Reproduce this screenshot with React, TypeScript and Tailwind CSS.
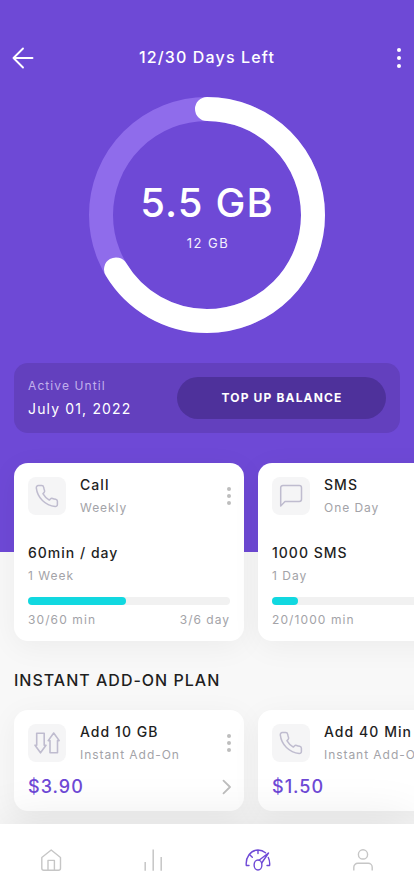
import React from 'react';

interface Usage {
  title: string;
  period: string;
  amount: string;
  duration: string;
  used: string;
  daysUsed?: string;
  percent: number;
  icon: React.ReactNode;
}

interface AddOn {
  title: string;
  price: string;
  icon: React.ReactNode;
}

const PhoneIcon = () => (
  <svg width="38" height="38" viewBox="0 0 38 38" fill="none" stroke="#bfbccf" strokeWidth="1.5" strokeLinejoin="round">
    <path d="M10.3 8.6h3.4c1 0 1.8.7 2 1.7.2 1.2.4 2.1.8 3.1.3.8.1 1.6-.5 2.2l-1.1 1.1c1.6 2.9 3.5 4.8 6.4 6.4l1.1-1.1c.6-.6 1.4-.8 2.2-.5 1 .4 1.9.6 3.1.8 1 .2 1.7 1 1.7 2v3.2c0 1.2-1 2.1-2.2 2C17.3 28.4 9.4 20.7 8.3 10.8 8.2 9.6 9.1 8.6 10.3 8.6z" />
  </svg>
);

const MessageIcon = () => (
  <svg width="38" height="38" viewBox="0 0 38 38" fill="none" stroke="#bfbccf" strokeWidth="1.5" strokeLinejoin="round">
    <path d="M8.7 29V10.7a2.2 2.2 0 0 1 2.2-2.2h16.4a2.2 2.2 0 0 1 2.2 2.2v11.6a2.2 2.2 0 0 1-2.2 2.2H13z" />
  </svg>
);

const TransferIcon = () => (
  <svg width="38" height="38" viewBox="0 0 38 38" fill="none" stroke="#bfbccf" strokeWidth="1.6" strokeLinejoin="round">
    <path d="M8.7 9.2h7.5v12H18l-5.5 7.6L7 21.2h1.7z" />
    <path d="M22 28.7h7.5V16.6h1.7L25.7 9l-5.5 7.6H22z" />
  </svg>
);

const usages: Usage[] = [
  { title: 'Call', period: 'Weekly', amount: '60min / day', duration: '1 Week', used: '30/60 min', daysUsed: '3/6 day', percent: 48.5, icon: <PhoneIcon /> },
  { title: 'SMS', period: 'One Day', amount: '1000 SMS', duration: '1 Day', used: '20/1000 min', percent: 12.9, icon: <MessageIcon /> },
];

const addOns: AddOn[] = [
  { title: 'Add 10 GB', price: '$3.90', icon: <TransferIcon /> },
  { title: 'Add 40 Min', price: '$1.50', icon: <PhoneIcon /> },
];

const CardHeader: React.FC<{ icon: React.ReactNode; title: string; subtitle: string }> = ({ icon, title, subtitle }) => (
  <div className="flex h-[38px] items-center">
    <div className="h-[38px] w-[38px] shrink-0 rounded-lg bg-[#f5f5f6]">{icon}</div>
    <div className="ml-3.5 flex flex-1 flex-col gap-1 whitespace-nowrap">
      <span className="text-sm leading-5 font-medium tracking-[1.05px] text-[#1f1f1f]">{title}</span>
      <span className="text-xs leading-[18px] tracking-[0.95px] text-[#a3a3a8]">{subtitle}</span>
    </div>
    <button className="flex w-4 flex-col items-end gap-[3px] pr-px" aria-label="More">
      <span className="h-1 w-1 translate-x-0.5 rounded-full bg-[#bdbdbd]" />
      <span className="h-1 w-1 translate-x-0.5 rounded-full bg-[#bdbdbd]" />
      <span className="h-1 w-1 translate-x-0.5 rounded-full bg-[#bdbdbd]" />
    </button>
  </div>
);

const UsageRing: React.FC<{ ratio: number }> = ({ ratio }) => {
  const radius = 106;
  const length = 2 * Math.PI * radius;

  return (
    <div className="mx-auto grid h-[236px] w-[236px] place-items-center">
      <svg className="col-start-1 row-start-1" width="236" height="236" viewBox="0 0 236 236" fill="none" strokeWidth="24">
        <circle cx="118" cy="118" r={radius} stroke="#8f6ceb" />
        <circle
          cx="118"
          cy="118"
          r={radius}
          stroke="#fff"
          strokeLinecap="round"
          strokeDasharray={`${length * ratio} ${length}`}
          transform="rotate(-90 118 118)"
        />
      </svg>
      <div className="col-start-1 row-start-1 flex flex-col items-center gap-1.5 pt-0.5 text-white">
        <span className="text-[40px] leading-12 font-[450] tracking-[1.1px]">5.5 GB</span>
        <span className="pl-0.5 text-[13px] leading-5 tracking-[1.5px] text-[#f4f0fd]">12 GB</span>
      </div>
    </div>
  );
};

const App: React.FC = () => {
  return (
    <div className="flex h-[896px] w-[414px] flex-col overflow-hidden bg-[#f8f8f8] font-['Inter',sans-serif]">
      {/* Balance */}
      <section className="h-[552px] shrink-0 bg-[#6e49d6]">
        <header className="flex h-[97px] items-center justify-between pt-[19px] pr-[13px] pl-3">
          <button aria-label="Back">
            <svg width="22" height="22" viewBox="0 0 22 22" fill="none" stroke="#fff" strokeWidth="1.9" strokeLinecap="round" strokeLinejoin="round">
              <path d="M20.5 11h-19M11 1.5L1.5 11l9.5 9.5" />
            </svg>
          </button>
          <h1 className="pb-0.5 pl-px text-base leading-6 font-medium tracking-[1.15px] text-white">12/30 Days Left</h1>
          <button className="flex w-[22px] flex-col items-end gap-1" aria-label="Menu">
            <span className="h-1 w-1 rounded-full bg-white" />
            <span className="h-1 w-1 rounded-full bg-white" />
            <span className="h-1 w-1 rounded-full bg-white" />
          </button>
        </header>

        <UsageRing ratio={0.6635} />

        <div className="mx-3.5 mt-[30px] flex h-[70px] items-center justify-between rounded-[14px] bg-[#6340be] px-3.5">
          <div className="flex flex-col gap-1">
            <span className="text-xs leading-[18px] tracking-[1.1px] text-[#c1b0ec]">Active Until</span>
            <span className="text-sm leading-5 tracking-[1.15px] text-white">July 01, 2022</span>
          </div>
          <button className="h-[42px] w-[209px] rounded-full bg-[#4e319b] pl-px text-xs font-bold tracking-[1.15px] text-white">
            TOP UP BALANCE
          </button>
        </div>
      </section>

      {/* Current plans */}
      <div className="-mt-[89px] flex shrink-0 gap-3.5 pl-3.5">
        {usages.map(item => (
          <article key={item.title} className="h-[178px] w-[230px] shrink-0 rounded-[14px] bg-white p-3.5 shadow-[0_6px_30px_rgba(0,0,0,0.05)]">
            <CardHeader icon={item.icon} title={item.title} subtitle={item.period} />
            <div className="mt-7 text-sm leading-5 font-medium tracking-[1px] text-[#1f1f1f]">{item.amount}</div>
            <div className="mt-1 text-xs leading-[18px] tracking-[1px] text-[#a3a3a8]">{item.duration}</div>
            <div className="mt-3 h-2 rounded-full bg-[#f1f1f1]">
              <div className="h-2 rounded-full bg-[#11d8e0]" style={{ width: `${item.percent}%` }} />
            </div>
            <div className="mt-1.5 flex justify-between text-xs leading-[18px] tracking-[1.1px] text-[#a3a3a8]">
              <span>{item.used}</span>
              {item.daysUsed && <span className="tracking-[1px]">{item.daysUsed}</span>}
            </div>
          </article>
        ))}
      </div>

      {/* Add-ons */}
      <h2 className="mt-[27px] shrink-0 pl-3.5 text-base leading-6 font-medium tracking-[1px] text-[#1f1f1f]">INSTANT ADD-ON PLAN</h2>
      <div className="mt-[18px] flex shrink-0 gap-3.5 pl-3.5">
        {addOns.map(item => (
          <article key={item.title} className="h-[101px] w-[230px] shrink-0 rounded-[14px] bg-white p-3.5 shadow-[0_6px_30px_rgba(0,0,0,0.05)]">
            <CardHeader icon={item.icon} title={item.title} subtitle="Instant Add-On" />
            <div className="mt-[13px] flex h-6 items-center justify-between">
              <span className="text-lg leading-6 font-medium tracking-[1px] text-[#6e49d6]">{item.price}</span>
              <svg className="-mr-1" width="12" height="16" viewBox="0 0 12 16" fill="none" stroke="#bdbdbd" strokeWidth="1.8" strokeLinecap="round" strokeLinejoin="round">
                <path d="M1.5 1.7L8 8l-6.5 6.3" />
              </svg>
            </div>
          </article>
        ))}
      </div>

      {/* Tab bar */}
      <nav className="z-10 mt-[13px] flex h-[72px] shrink-0 items-center justify-between bg-white px-[37px] shadow-[0_-4px_50px_rgba(0,0,0,0.09)]">
        <button aria-label="Home">
          <svg width="28" height="28" viewBox="0 0 28 28" fill="none" stroke="#c6c6c6" strokeWidth="1.4" strokeLinejoin="round">
            <path d="M4.8 11.5L14.2 4l9.3 7.5v10.7a2 2 0 0 1-2 2H6.8a2 2 0 0 1-2-2z" />
            <path d="M11 24v-9.6h6.4V24" />
          </svg>
        </button>
        <button aria-label="Statistics">
          <svg width="28" height="28" viewBox="0 0 28 28" fill="none" stroke="#c6c6c6" strokeWidth="1.5">
            <path d="M4.2 16v8.7M12.2 3.5v21.2M20.2 11v13.7" />
          </svg>
        </button>
        <button aria-label="Usage">
          <svg width="28" height="28" viewBox="1 0 28 28" fill="none" stroke="#6e49d6" strokeWidth="1.4" strokeLinecap="round" strokeLinejoin="round">
            <path d="M5 19.5H2.3C1.4 11.5 6.5 4 14 4c3 0 5.5 1 7.5 2.8M24.3 11.5c1.2 2.5 1.6 5.5 1.3 8H23M14 4v3.5M6 9l2.3 2.3" />
            <ellipse cx="14" cy="19" rx="3.9" ry="5" />
            <path d="M15 14.2L24.5 7l-6.8 10" />
          </svg>
        </button>
        <button aria-label="Profile">
          <svg width="28" height="28" viewBox="0 0 28 28" fill="none" stroke="#c6c6c6" strokeWidth="1.4">
            <circle cx="14" cy="8.4" r="4.6" />
            <path d="M4.8 24.5v-3.2a4 4 0 0 1 4-4h10.4a4 4 0 0 1 4 4v3.2" />
          </svg>
        </button>
      </nav>
    </div>
  );
};

export default App;
